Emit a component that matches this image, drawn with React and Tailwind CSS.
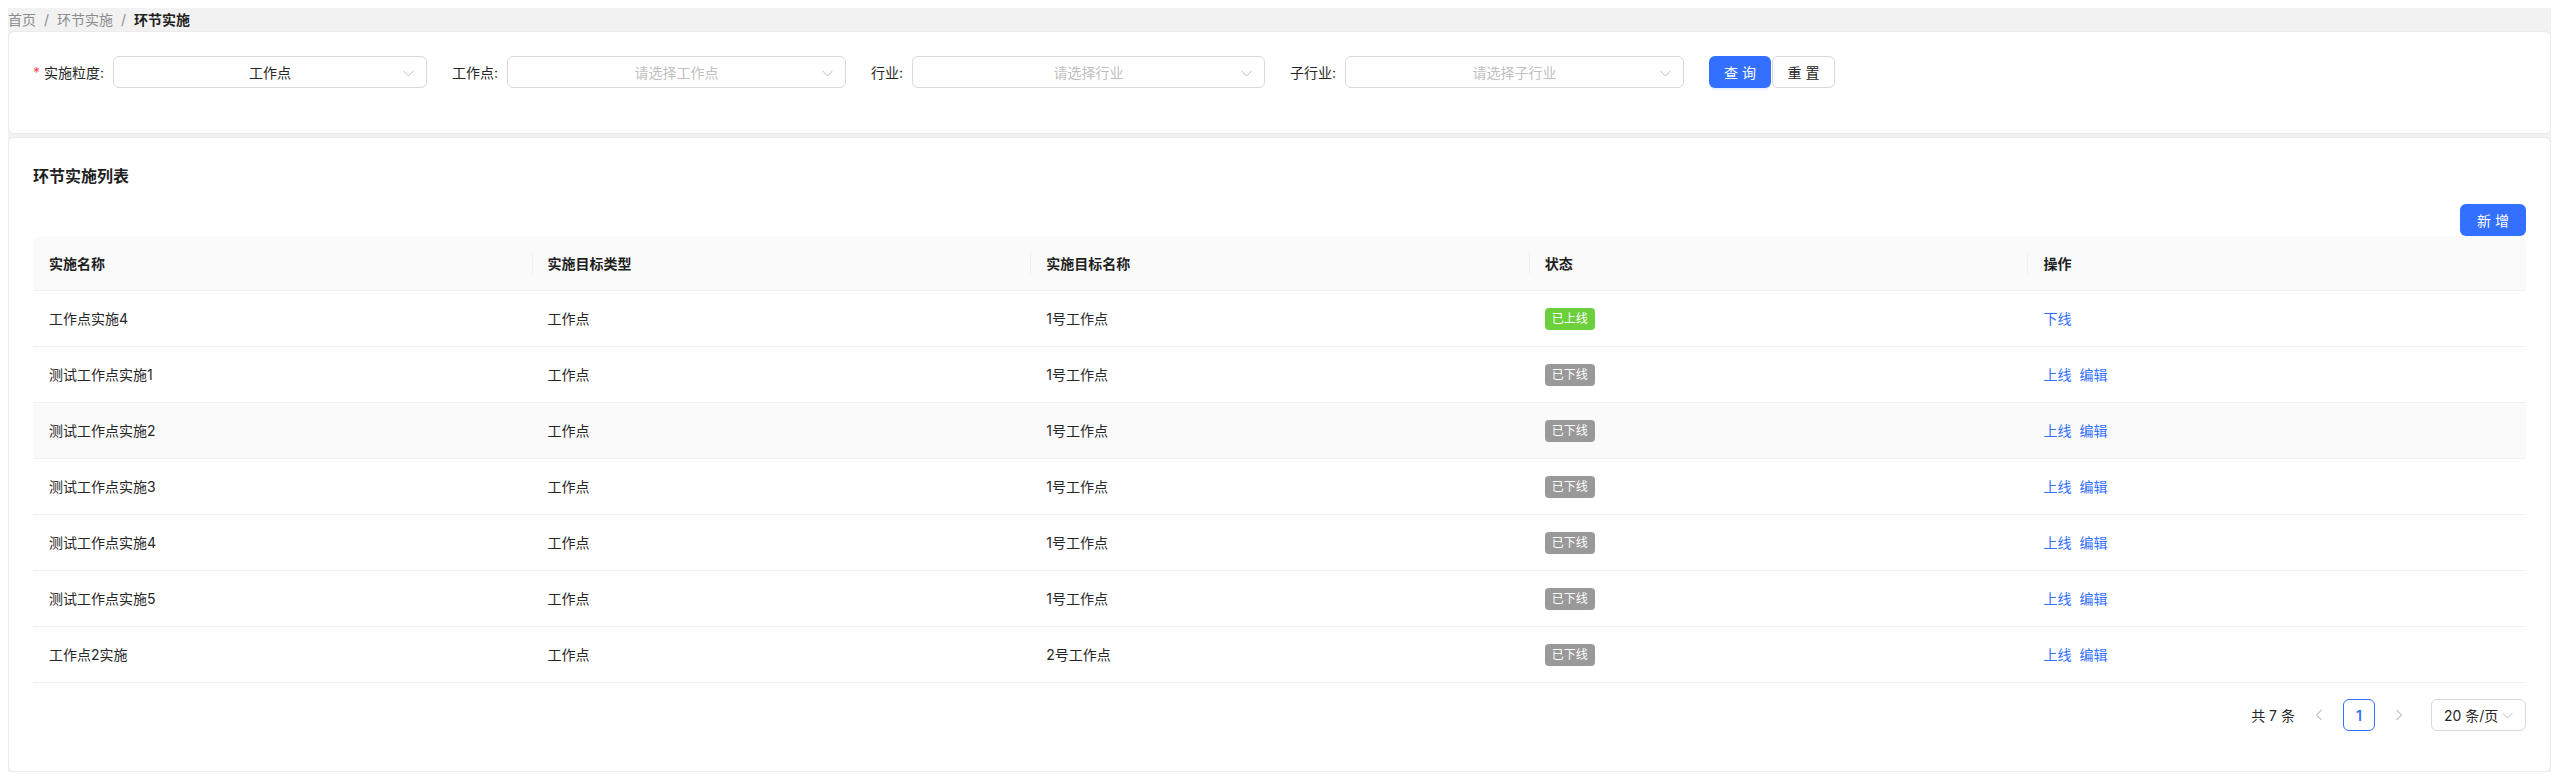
import React from 'react';

const rows = [
  { name: '工作点实施4', type: '工作点', target: '1号工作点', online: true },
  { name: '测试工作点实施1', type: '工作点', target: '1号工作点', online: false },
  { name: '测试工作点实施2', type: '工作点', target: '1号工作点', online: false, hover: true },
  { name: '测试工作点实施3', type: '工作点', target: '1号工作点', online: false },
  { name: '测试工作点实施4', type: '工作点', target: '1号工作点', online: false },
  { name: '测试工作点实施5', type: '工作点', target: '1号工作点', online: false },
  { name: '工作点2实施', type: '工作点', target: '2号工作点', online: false },
];

const headers = ['实施名称', '实施目标类型', '实施目标名称', '状态', '操作'];

function Chevron({ className = '' }) {
  return (
    <svg width="11" height="7" viewBox="0 0 11 7" className={className}>
      <polyline points="0.5,0.8 5.5,6 10.5,0.8" fill="none" stroke="#bfbfbf" strokeWidth="1" />
    </svg>
  );
}

function Select({ value, placeholder }) {
  return (
    <div className="relative flex-1 h-8 rounded-md border border-[#d9d9d9] bg-white flex items-center justify-center">
      {value ? (
        <span className="text-[#262626]">{value}</span>
      ) : (
        <span className="text-[#bfbfbf]">{placeholder}</span>
      )}
      <Chevron className="absolute right-3 top-[13px]" />
    </div>
  );
}

function FormItem({ label, required, children }) {
  return (
    <div className="w-[394px] flex items-center">
      <label className="whitespace-nowrap text-[#262626] mr-[9px]">
        {required && <span className="text-[#ff4d4f] mr-1">*</span>}
        {label}:
      </label>
      {children}
    </div>
  );
}

export default function App() {
  return (
    <div
      className="min-h-screen bg-white pt-2 pl-2 pr-[5px] text-[14px]"
      style={{ fontFamily: 'Inter, "Noto Sans CJK SC", sans-serif' }}
    >
      <div className="bg-[#f2f2f2]">
        {/* Breadcrumb */}
        <div className="h-[23px] flex items-center text-[14px] leading-[22px]">
          <span className="text-[#8c8c8c]">首页</span>
          <span className="text-[#8c8c8c] mx-2">/</span>
          <span className="text-[#8c8c8c]">环节实施</span>
          <span className="text-[#8c8c8c] mx-2">/</span>
          <span className="text-[#1f1f1f] font-bold">环节实施</span>
        </div>

        {/* Filter card */}
        <div className="bg-white rounded-md border border-[#ebebeb] px-6 pt-6 pb-[21px]">
          <div className="flex items-center gap-[25px] mb-6">
            <FormItem label="实施粒度" required>
              <Select value="工作点" />
            </FormItem>
            <FormItem label="工作点">
              <Select placeholder="请选择工作点" />
            </FormItem>
            <FormItem label="行业">
              <Select placeholder="请选择行业" />
            </FormItem>
            <FormItem label="子行业">
              <Select placeholder="请选择子行业" />
            </FormItem>
            <div className="flex items-center gap-px">
              <button className="h-8 w-[62px] rounded-md bg-[#3370ff] text-white shadow-[0_2px_0_rgba(5,95,255,0.08)]">
                查 询
              </button>
              <button className="h-8 w-[63px] rounded-md border border-[#d9d9d9] bg-white text-[#262626]">
                重 置
              </button>
            </div>
          </div>
        </div>

        {/* List card */}
        <div className="mt-[3px] bg-white rounded-md border border-[#ebebeb] px-6 pt-6 pb-6">
          <h2 className="text-[16px] leading-7 font-semibold text-[#1f1f1f]">环节实施列表</h2>
          <div className="flex justify-end mt-[14px]">
            <button className="h-8 w-[66px] rounded-md bg-[#3370ff] text-white">新 增</button>
          </div>

          <div>
            <div className="grid grid-cols-5 h-[55px] bg-[#fafafa] rounded-t-lg border-b border-[#f0f0f0]">
              {headers.map((h, i) => (
                <div key={h} className="relative flex items-center px-4 font-semibold text-[#1f1f1f]">
                  {i > 0 && <span className="absolute left-0 top-1/2 -translate-y-1/2 w-px h-[22px] bg-[#f0f0f0]" />}
                  {h}
                </div>
              ))}
            </div>
            {rows.map((r) => (
              <div
                key={r.name}
                className={`grid grid-cols-5 h-14 border-b border-[#f0f0f0] text-[#262626] ${r.hover ? 'bg-[#fafafa]' : ''}`}
              >
                <div className="flex items-center px-4">{r.name}</div>
                <div className="flex items-center px-4">{r.type}</div>
                <div className="flex items-center px-4">{r.target}</div>
                <div className="flex items-center px-4">
                  {r.online ? (
                    <span className="h-[22px] px-[7px] rounded bg-[#6bd03c] text-white text-[12px] leading-[22px]">已上线</span>
                  ) : (
                    <span className="h-[22px] px-[7px] rounded bg-[#999999] text-white text-[12px] leading-[22px]">已下线</span>
                  )}
                </div>
                <div className="flex items-center px-4 gap-2 text-[#3370ff]">
                  {r.online ? (
                    <a>下线</a>
                  ) : (
                    <>
                      <a>上线</a>
                      <a>编辑</a>
                    </>
                  )}
                </div>
              </div>
            ))}
          </div>

          {/* Pagination */}
          <div className="mt-4 mb-4 flex justify-end items-center h-8 text-[#262626]">
            <span className="mr-2">共 7 条</span>
            <span className="w-8 h-8 flex items-center justify-center">
              <svg width="8" height="12" viewBox="0 0 8 12">
                <polyline points="6.5,1 1.5,6 6.5,11" fill="none" stroke="#c8c8c8" strokeWidth="1.2" />
              </svg>
            </span>
            <span className="ml-2 w-8 h-8 rounded-md border border-[#3370ff] text-[#3370ff] font-semibold flex items-center justify-center">
              1
            </span>
            <span className="ml-2 w-8 h-8 flex items-center justify-center">
              <svg width="8" height="12" viewBox="0 0 8 12">
                <polyline points="1.5,1 6.5,6 1.5,11" fill="none" stroke="#c8c8c8" strokeWidth="1.2" />
              </svg>
            </span>
            <div className="ml-4 w-[95px] h-8 rounded-md border border-[#d9d9d9] flex items-center justify-between pl-3 pr-3">
              <span>20 条/页</span>
              <Chevron />
            </div>
          </div>
        </div>
      </div>
    </div>
  );
}
